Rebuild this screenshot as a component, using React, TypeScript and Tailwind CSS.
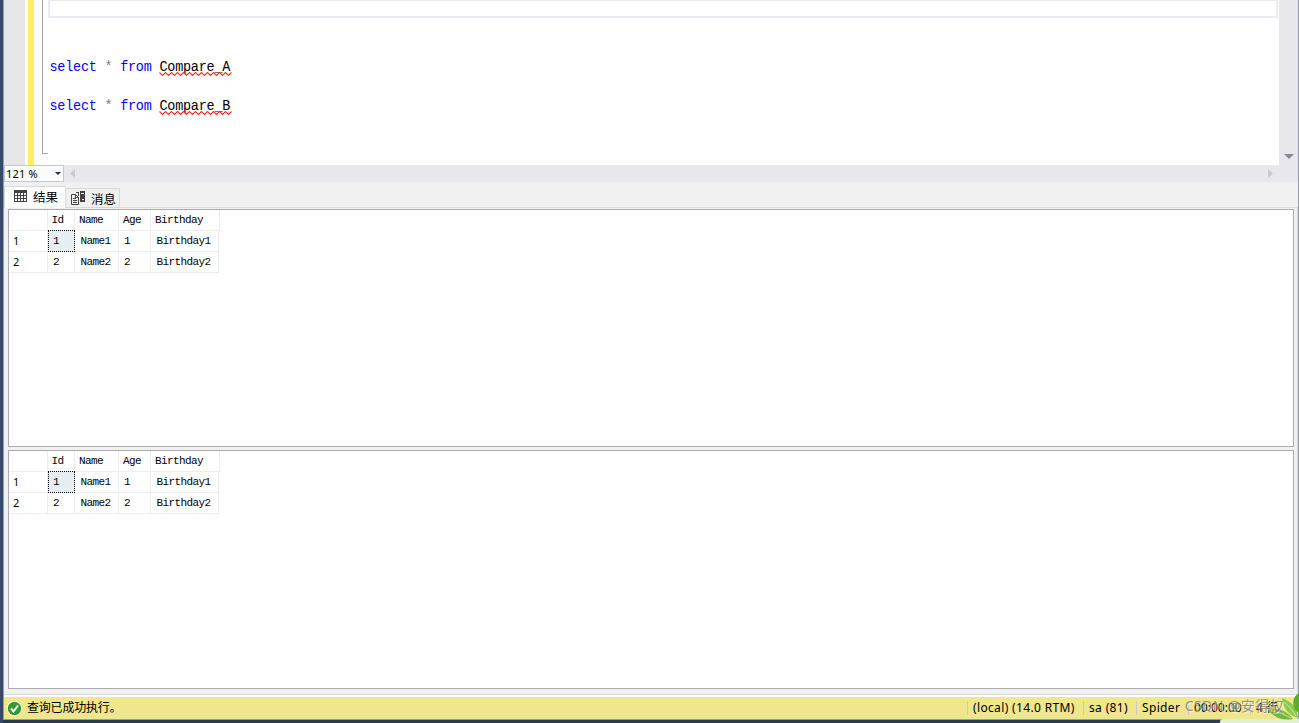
import React from "react";

interface Row {
  id: string;
  name: string;
  age: string;
  birthday: string;
}

const rows: Row[] = [
  { id: "1", name: "Name1", age: "1", birthday: "Birthday1" },
  { id: "2", name: "Name2", age: "2", birthday: "Birthday2" },
];

const Squiggle = () => (
  <svg className="absolute left-0 top-[14px]" width="73" height="4" viewBox="0 0 73 4" fill="none">
    <path
      d={"M0.5 0.5" + Array.from({ length: 12 }, () => " l3 2.6 l3 -2.6").join("")}
      stroke="#ff2a2a"
      strokeWidth="1.1"
    />
  </svg>
);

const QueryLine = ({ table }: { table: string }) => (
  <div className="h-[19.5px] origin-[0_14px] scale-y-[1.13] whitespace-pre font-['Liberation_Mono','Noto_Sans_CJK_SC',monospace] text-[13.5px] leading-[19px] tracking-[-0.25px] text-black">
    <span className="text-[#0000ff]">select</span>
    <span className="text-[#808080]"> * </span>
    <span className="text-[#0000ff]">from</span>{" "}
    <span className="relative inline-block">
      {table}
      <Squiggle />
    </span>
  </div>
);

const Editor = () => (
  <div className="flex h-[165px] shrink-0 bg-white">
    <div className="w-[21px] bg-[#e6e7e8]" />
    <div className="ml-[3px] w-[6px] bg-[#ffee62]" />
    <div className="ml-2 h-[154px] w-[6px] border-b border-l border-[#a5a5a5]" />
    <div className="flex flex-1 flex-col">
      <div className="h-[18px] w-[1230px] shrink-0 border-2 border-t-1 border-[#eaeaf2]" />
      <div className="pl-[1.5px] pt-10">
        <QueryLine table="Compare_A" />
        <div className="h-[19.5px]" />
        <QueryLine table="Compare_B" />
      </div>
    </div>
    <div className="flex w-[19px] items-end justify-center bg-[#e8e8ec] pb-[6px]">
      <svg width="10" height="5" viewBox="0 0 10 5">
        <path d="M0 0h10L5 5z" fill="#868999" />
      </svg>
    </div>
  </div>
);

const ZoomBar = () => (
  <div className="flex h-[17px] shrink-0 items-center bg-[#e8e8ec]">
    <div className="flex h-[17px] w-[60px] items-center justify-between border border-[#c3c7dc] bg-[#fcfcfc] pl-px pr-[2px] font-['Noto_Sans',sans-serif] text-[11px] leading-none text-black">
      <span className="tracking-[0.2px]">121 %</span>
      <svg width="6" height="3" viewBox="0 0 6 3">
        <path d="M0 0h6L3 3z" fill="#1e2a3d" />
      </svg>
    </div>
    <svg className="ml-[6px]" width="5" height="9" viewBox="0 0 5 9">
      <path d="M5 0v9L0 4.5z" fill="#c9c9d2" />
    </svg>
    <svg className="ml-auto mr-[25px]" width="5" height="9" viewBox="0 0 5 9">
      <path d="M0 0v9l5-4.5z" fill="#c9c9d2" />
    </svg>
  </div>
);

const GridIcon = () => (
  <svg className="-mt-[3px]" width="13" height="12" viewBox="0 0 13 12">
    <path d="M0 0h13v12H0z" fill="#424242" />
    <path
      d="M1 3h2v2H1zM4 3h2v2H4zM7 3h2v2H7zM10 3h2v2h-2zM1 6h2v2H1zM4 6h2v2H4zM7 6h2v2H7zM10 6h2v2h-2zM1 9h2v2H1zM4 9h2v2H4zM7 9h2v2H7zM10 9h2v2h-2z"
      fill="#fff"
    />
  </svg>
);

const MessageIcon = () => (
  <svg width="15" height="14" viewBox="0 0 15 14" fill="none">
    <path d="M.5 3.5h4l3 3v7h-7z" fill="#f0f0f0" stroke="#424242" />
    <path d="M4.5 3.5v3h3M2 7.5h3M2 9.5h4M2 11.5h4" stroke="#424242" />
    <path d="M9 0h5v11H9z" fill="#424242" />
    <path d="M10 2.5h3" stroke="#f0f0f0" />
    <path d="M11 8h2v1h-2z" fill="#f0f0f0" />
    <path d="M5 1.5h3M7.5 1v4" stroke="#424242" />
  </svg>
);

const Tabs = () => (
  <div className="flex h-[26px] shrink-0 items-end border-b border-[#d9d9d9] pt-1 font-['Noto_Sans_CJK_SC',sans-serif] text-[12.5px] text-black">
    <div className="-mb-px flex h-[22px] w-[62px] items-center gap-[6px] border border-b-0 border-[#d9d9d9] bg-white pl-[9px]">
      <GridIcon />
      <span className="-mt-px leading-5">结果</span>
    </div>
    <div className="flex h-[19px] w-[54px] items-center gap-[5px] border border-b-0 border-l-0 border-[#d9d9d9] pl-[5px]">
      <MessageIcon />
      <span className="whitespace-nowrap pt-[2px] leading-5">消息</span>
    </div>
  </div>
);

const cell = "border-b border-r border-[#ededed]";

const ResultGrid = () => (
  <div className="flex-1 border border-[#ababab] bg-white font-['Liberation_Mono',monospace] text-[11px] leading-[21px] tracking-[-0.6px] text-black">
    <div className="grid h-[21px] w-[211px] grid-cols-[39px_27px_44px_32px_69px] grid-rows-[21px]">
      <div className={cell} />
      <div className={`${cell} pl-[3.5px]`}>Id</div>
      <div className={`${cell} pl-1`}>Name</div>
      <div className={`${cell} pl-1`}>Age</div>
      <div className={`${cell} pl-1`}>Birthday</div>
    </div>
    {rows.map((row, i) => (
      <div key={row.id} className="grid h-[21px] w-[210px] grid-cols-[39px_27px_44px_32px_68px] grid-rows-[21px] leading-5">
        <div className={`${cell} pl-1 font-['Noto_Sans',sans-serif]`}>{row.id}</div>
        {i === 0 ? (
          <div className="-mt-px border border-dotted border-black bg-[#e8edf2] pl-1">{row.id}</div>
        ) : (
          <div className={`${cell} pl-[5px]`}>{row.id}</div>
        )}
        <div className={`${cell} pl-[5.5px]`}>{row.name}</div>
        <div className={`${cell} pl-[5px]`}>{row.age}</div>
        <div className={`${cell} pl-[5.5px]`}>{row.birthday}</div>
      </div>
    ))}
  </div>
);

const Leaves = () => (
  <svg className="absolute bottom-0 right-0" width="79" height="30" viewBox="0 0 79 30">
    <path d="M0 30v-2q1-2 3-2h76v4z" fill="#e2f0d2" />
    <path d="M48 17q15-4 25 9q-15 3-25-9z" fill="#73b83c" />
    <path d="M62 5q15 5 16 20q-14-4-16-20z" fill="#8aca4b" />
    <path d="M79 0q-9 6-4 17l4 3z" fill="#5fab30" />
    <path d="M51 18q11 1 20 7M64 9q8 6 12 14" stroke="#c9e99a" fill="none" />
  </svg>
);

const StatusBar = () => (
  <div className="flex h-[22px] shrink-0 items-center bg-[#f0e68c] font-['Noto_Sans','Noto_Sans_CJK_SC',sans-serif] text-[12px] leading-5 text-black">
    <svg className="ml-[3px]" width="15" height="15" viewBox="0 0 15 15">
      <circle cx="7.5" cy="7.5" r="7.5" fill="#fff" />
      <circle cx="7.5" cy="7.5" r="6.7" fill="#339933" />
      <path d="M4 7.5l2.5 3L11 4.5" stroke="#fff" strokeWidth="2" fill="none" />
    </svg>
    <span className="ml-[5px] tracking-[-0.2px]">查询已成功执行。</span>
    <div className="ml-auto flex h-full w-[331px] items-center whitespace-nowrap tracking-[0.35px]">
      <span className="w-[116px] border-l border-[#c9c9c9] pl-[5px] leading-[14px]">(local) (14.0 RTM)</span>
      <span className="w-[53px] border-l border-[#c9c9c9] pl-[5px] leading-[14px]">sa (81)</span>
      <span className="w-[52px] border-l border-[#c9c9c9] pl-[5px] leading-[14px]">Spider</span>
      <span className="w-[62px] border-l border-[#c9c9c9] pl-[5px] leading-[14px] tracking-normal">00:00:00</span>
      <span className="border-l border-[#c9c9c9] pl-[5px] leading-[14px] tracking-normal">4 行</span>
    </div>
  </div>
);

export default function App() {
  return (
    <div className="relative flex h-[723px] w-[1299px] flex-col overflow-hidden border-l-[3px] border-[#35496a] bg-[#f0f0f0]">
      <div className="flex flex-1 flex-col border-l border-r border-[#8e9bbc]">
        <Editor />
        <ZoomBar />
        <Tabs />
        <div className="flex h-[486px] shrink-0 flex-col border-r border-[#d9d9d9] pb-[5px] pl-1 pr-[3px] pt-px">
          <div className="flex h-[238px] shrink-0 flex-col">
            <ResultGrid />
          </div>
          <div className="mt-[3px] flex flex-1 flex-col">
            <ResultGrid />
          </div>
        </div>
        <div className="h-[3px] shrink-0 border-t border-[#d9d9d9] bg-white" />
        <StatusBar />
      </div>
      <div className="h-[4px] shrink-0 border-t border-[#8e9bbc] bg-[#293955]" />
      <Leaves />
      <div className="absolute bottom-[5px] right-[15px] whitespace-nowrap font-['Noto_Sans','Noto_Sans_CJK_SC',sans-serif] text-[14px] leading-6 tracking-[0.4px] text-[#777777]/80 [text-shadow:1px_1px_0_rgba(255,255,255,0.6)]">
        CSDN @安得权
      </div>
    </div>
  );
}
